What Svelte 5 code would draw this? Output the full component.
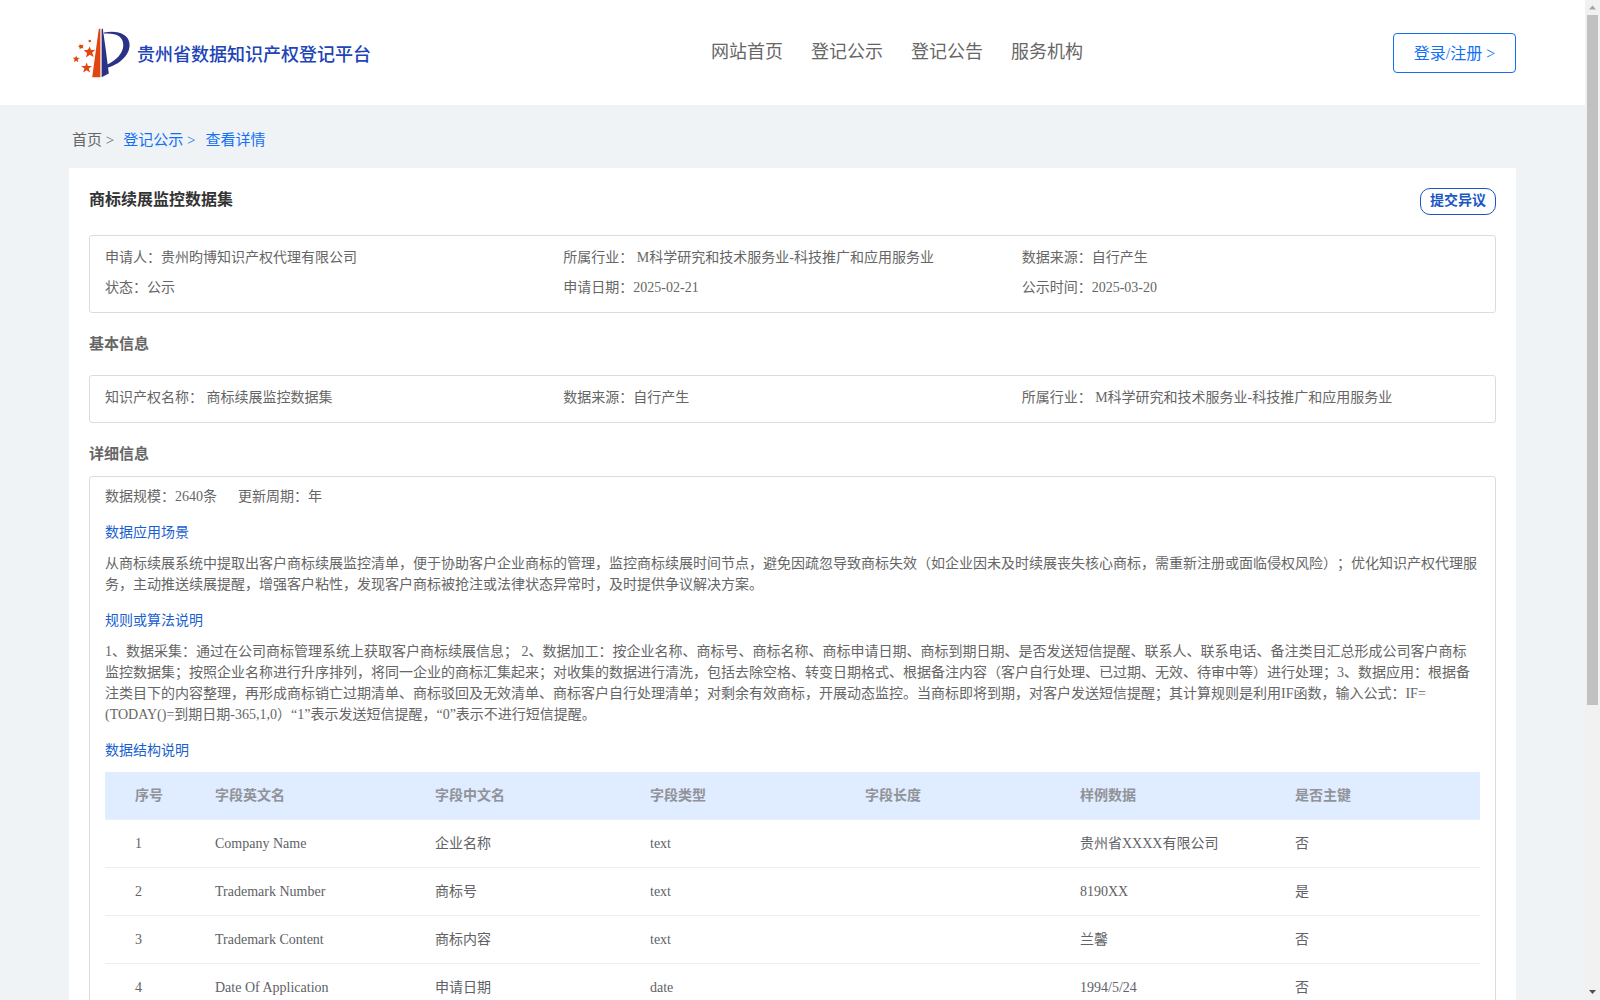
<script>
  const nav = ['网站首页', '登记公示', '登记公告', '服务机构'];

  const summary = [
    '申请人：贵州昀博知识产权代理有限公司',
    '所属行业： M科学研究和技术服务业-科技推广和应用服务业',
    '数据来源：自行产生',
    '状态：公示',
    '申请日期：2025-02-21',
    '公示时间：2025-03-20'
  ];

  const basics = [
    '知识产权名称： 商标续展监控数据集',
    '数据来源：自行产生',
    '所属行业： M科学研究和技术服务业-科技推广和应用服务业'
  ];

  const scene = [
    '从商标续展系统中提取出客户商标续展监控清单，便于协助客户企业商标的管理，监控商标续展时间节点，避免因疏忽导致商标失效（如企业因未及时续展丧失核心商标，需重新注册或面临侵权风险）；优化知识产权代理服',
    '务，主动推送续展提醒，增强客户粘性，发现客户商标被抢注或法律状态异常时，及时提供争议解决方案。'
  ];

  const rules = [
    '1、数据采集：通过在公司商标管理系统上获取客户商标续展信息； 2、数据加工：按企业名称、商标号、商标名称、商标申请日期、商标到期日期、是否发送短信提醒、联系人、联系电话、备注类目汇总形成公司客户商标',
    '监控数据集；按照企业名称进行升序排列，将同一企业的商标汇集起来；对收集的数据进行清洗，包括去除空格、转变日期格式、根据备注内容（客户自行处理、已过期、无效、待审中等）进行处理；3、数据应用：根据备',
    '注类目下的内容整理，再形成商标销亡过期清单、商标驳回及无效清单、商标客户自行处理清单；对剩余有效商标，开展动态监控。当商标即将到期，对客户发送短信提醒；其计算规则是利用IF函数，输入公式：IF=',
    '(TODAY()=到期日期-365,1,0）“1”表示发送短信提醒，“0”表示不进行短信提醒。'
  ];

  const columns = ['序号', '字段英文名', '字段中文名', '字段类型', '字段长度', '样例数据', '是否主键'];
  const rows = [
    ['1', 'Company Name', '企业名称', 'text', '', '贵州省XXXX有限公司', '否'],
    ['2', 'Trademark Number', '商标号', 'text', '', '8190XX', '是'],
    ['3', 'Trademark Content', '商标内容', 'text', '', '兰馨', '否'],
    ['4', 'Date Of Application', '申请日期', 'date', '', '1994/5/24', '否']
  ];
</script>

<div class="window">
  <div class="page">
    <header>
      <div class="brand">
        <svg class="logo" width="58" height="50" viewBox="0 0 58 50" aria-hidden="true">
          <path fill="#e2450f" d="M26.8 0.8h1.6V49.200H20.200z" />
          <path fill="#2b3187" d="M29.600 0.800h1.200L33.400 19l3.400 26.600L29.600 49.200z" />
          <path fill="#2b3187" d="M32 4.600C44 1.800 57.600 5.400 57.600 17C57.600 27.500 47 36.500 35.600 39.800L34.900 36.700C44 32.500 51.300 25.500 51.300 17C51.300 8.400 44 4.700 32 5.600z" />
          <g fill="#e2450f">
            <path d="M17.600 18.400l1.400 3.500 4.200-.2-3 3 1.500 4.300-3.900-2.200-3.700 2.600.9-4.300-3.300-2.900 4.300-.5z" />
            <path d="M14.600 34.600l1.300 3.500h4.100l-3.200 2.500 1.300 4-3.500-2.300-3.500 2.300 1.300-4-3.300-2.500h4.200z" />
            <path d="M4.200 27.400l.9 2.300 2.700.2-2.100 1.600.6 2.700-2.100-1.500-2.500 1.200.9-2.500L.8 29.500l2.500.2z" />
            <path d="M7.300 16.200l2 .9 2.200-.4-.7 1.900.6 1.800-2-.3-1.700 1.100-.2-2-1.500-1.200 1.700-.5z" />
            <circle cx="17.800" cy="13" r="1.300" />
          </g>
        </svg>
        <span class="site-name">贵州省数据知识产权登记平台</span>
      </div>
      <nav>
        {#each nav as item}<span>{item}</span>{/each}
      </nav>
      <button class="login">登录/注册 &gt;</button>
    </header>

    <div class="crumbs">
      <span>首页 &gt;</span>
      <span class="link">登记公示 &gt;</span>
      <span class="link">查看详情</span>
    </div>

    <main>
      <div class="title-row">
        <h1>商标续展监控数据集</h1>
        <button class="objection">提交异议</button>
      </div>

      <section class="box summary">
        {#each summary as item}<span>{item}</span>{/each}
      </section>

      <h2 class="basic-title">基本信息</h2>
      <section class="box basics">
        {#each basics as item}<span>{item}</span>{/each}
      </section>

      <h2 class="detail-title">详细信息</h2>
      <section class="box detail">
        <div class="meta"><span>数据规模：2640条</span><span>更新周期：年</span></div>
        <h3>数据应用场景</h3>
        <p>{#each scene as line}<span>{line}</span>{/each}</p>
        <h3>规则或算法说明</h3>
        <p>{#each rules as line}<span>{line}</span>{/each}</p>
        <h3>数据结构说明</h3>
        <div class="table">
          <div class="row head">
            {#each columns as c}<span>{c}</span>{/each}
          </div>
          {#each rows as r}
            <div class="row">
              {#each r as cell}<span>{cell}</span>{/each}
            </div>
          {/each}
        </div>
      </section>
    </main>
  </div>

  <div class="scrollbar">
    <svg width="15" height="15" viewBox="0 0 15 15"><path fill="#a3a3a3" d="M4 9.500h7L7.500 5.500z" /></svg>
    <div class="thumb"></div>
    <svg width="15" height="15" viewBox="0 0 15 15"><path fill="#505050" d="M4 5h7L7.500 9z" /></svg>
  </div>
</div>

<style>
  :global(body) {
    margin: 0;
    overflow: hidden;
  }
  .window {
    display: flex;
    width: 1600px;
    height: 1000px;
    overflow: hidden;
    font-family: 'Liberation Serif', 'Noto Sans CJK SC', serif;
    font-size: 14px;
    color: #666;
    background: #eff3f6;
    text-spacing-trim: space-all;
  }
  .window * {
    box-sizing: border-box;
  }
  .page {
    width: 1585px;
    height: 1000px;
    overflow: hidden;
    white-space: nowrap;
  }
  header {
    display: grid;
    grid-template-columns: 639px 1fr auto;
    height: 105px;
    padding: 0 69px 0 72px;
    background: #fff;
  }
  .brand {
    display: flex;
    align-items: flex-start;
    gap: 7px;
    padding-top: 28px;
  }
  .logo {
    display: block;
  }
  .site-name {
    padding-top: 14px;
    font-size: 18px;
    line-height: 26px;
    font-weight: 500;
    color: #2044b8;
  }
  nav {
    display: flex;
    gap: 28px;
    padding-top: 39px;
    font-size: 18px;
    line-height: 26px;
  }
  button {
    margin: 0;
    padding: 0;
    font-family: inherit;
    background: #fff;
  }
  .login {
    width: 123px;
    height: 40px;
    margin-top: 33px;
    padding-bottom: 3px;
    border: 1px solid #1370f5;
    border-radius: 4px;
    font-size: 16px;
    color: #1370f5;
  }
  .crumbs {
    display: flex;
    gap: 9px;
    height: 63px;
    padding: 24px 0 0 72px;
    font-size: 15px;
    line-height: 23px;
  }
  .link {
    color: #1370f5;
  }
  .link:last-child {
    margin-left: 1px;
  }
  main {
    width: 1447px;
    margin-left: 69px;
    padding: 20px 20px 0;
    background: #fff;
  }
  .title-row {
    display: flex;
    justify-content: space-between;
    height: 47px;
  }
  h1,
  h2,
  h3,
  p {
    margin: 0;
  }
  h1 {
    font-size: 16px;
    line-height: 24px;
    color: #333;
  }
  .objection {
    width: 76px;
    height: 27px;
    padding-bottom: 1px;
    border: 1px solid #1a56c4;
    border-radius: 10px;
    font-size: 14px;
    font-weight: 700;
    line-height: 22px;
    color: #1a56c4;
  }
  .box {
    border: 1px solid #dcdcdc;
    border-radius: 3px;
    padding: 0 15px;
  }
  .summary,
  .basics {
    display: grid;
    grid-template-columns: repeat(3, 1fr);
    align-content: start;
    line-height: 30px;
  }
  .summary {
    height: 78px;
    padding-top: 7px;
  }
  .basics {
    height: 48px;
    padding-top: 7px;
  }
  h2 {
    font-size: 15px;
    line-height: 22px;
  }
  .basic-title {
    height: 62px;
    padding-top: 20px;
  }
  .detail-title {
    height: 53px;
    padding-top: 20px;
  }
  .detail {
    height: 620px;
    padding-top: 9px;
  }
  .meta {
    display: flex;
    gap: 21px;
    height: 21px;
    line-height: 22px;
  }
  h3 {
    padding: 15px 0 10px;
    font-size: 14px;
    font-weight: 400;
    line-height: 21px;
    color: #1a5fd0;
  }
  p span {
    display: block;
    line-height: 21px;
  }
  .table {
    margin-top: 1px;
  }
  .row {
    display: grid;
    grid-template-columns: 80px 220px 215px 215px 215px 215px 1fr;
    height: 48px;
    padding-left: 30px;
    border-bottom: 1px solid #ebeef5;
    line-height: 48px;
    color: #606266;
  }
  .head {
    background: #e0ecff;
    font-weight: 700;
    line-height: 47px;
    color: #909399;
  }
  .scrollbar {
    display: flex;
    flex-direction: column;
    width: 15px;
    background: #f1f1f1;
  }
  .scrollbar svg {
    flex: none;
  }
  .scrollbar svg:last-child {
    margin-top: auto;
  }
  .thumb {
    width: 11px;
    height: 690px;
    margin-left: 2px;
    background: #c1c1c1;
  }
</style>
